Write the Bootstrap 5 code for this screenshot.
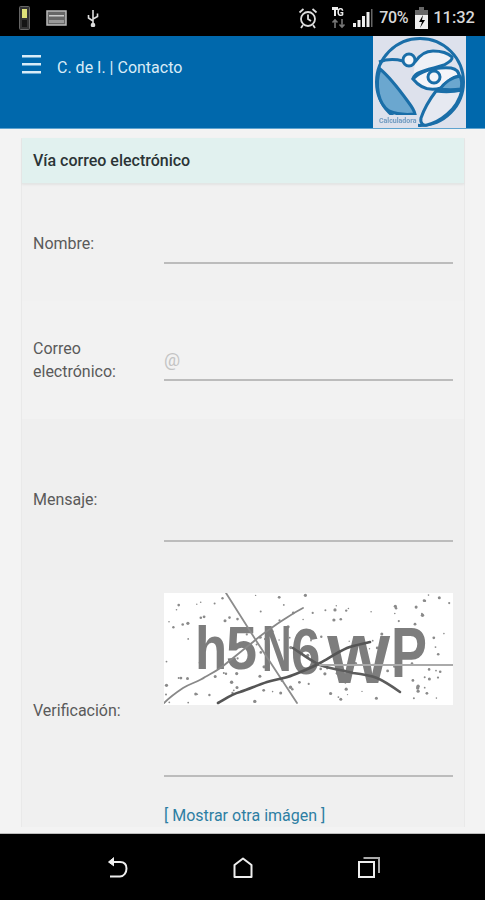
<!DOCTYPE html>
<html lang="es">
<head>
  <meta charset="UTF-8" />
  <meta name="viewport" content="width=device-width, initial-scale=1.0" />
  <title>C. de I. | Contacto</title>
  <link href="https://cdn.jsdelivr.net/npm/bootstrap@5.3.3/dist/css/bootstrap.min.css" rel="stylesheet" />
  <script src="https://cdn.jsdelivr.net/npm/bootstrap@5.3.3/dist/js/bootstrap.bundle.min.js"></script>
  <style>
    body { height: 900px; overflow: hidden; background: #f3f3f3; font-family: Roboto, "Liberation Sans", sans-serif; font-size: 16px; color: #5a5a5a; }
    .barra-estado { height: 36px; background: #000; color: #d8d8d8; padding: 0 10px 0 19px; }
    .barra-estado .hora { font-size: 16.500px; font-weight: 500; margin-left: 5px; }
    .barra-estado .nivel { font-size: 16px; font-weight: 500; letter-spacing: -.4px; margin: 0 7px 0 6px; }
    .icono-suave { filter: blur(.5px); }
    .alarma { margin-right: 13px; }
    .red { margin-right: 7px; }
    .cabecera { height: 93px; background: #0068ac; border-bottom: 1px solid #5ea3cf; padding: 0 19px 0 22px; }
    .cabecera-izq { padding-top: 19px; }
    .cabecera .titulo { color: #d9ecf7; font-size: 16px; margin-left: 16px; line-height: 26px; }
    .boton-menu { background: none; border: 0; padding: 0; line-height: 0; }
    .logo { width: 93px; height: 92px; display: block; }
    .contenido { flex: 1 1 auto; min-height: 0; overflow: hidden; padding: 9px 20px 0 21px; }
    .tarjeta { background: #f1f1f1; border: 0; border-left: 1px solid #e9e9e9; border-right: 1px solid #e9e9e9; border-radius: 0; }
    .tarjeta-titulo { height: 46px; background: #e1f1ef; color: #2b3436; font-size: 16px; font-weight: 500; padding: 0 11px; border-bottom: 1px solid #e3e6e5; line-height: 45px; box-shadow: 0 1px 2px rgba(0,0,0,.06); }
    .fila-campo { padding: 0 11px; }
    .etiqueta { flex: 0 0 131px; width: 131px; margin: 0; padding-right: 20px; line-height: 23px; }
    .control { flex: 1 1 auto; min-width: 0; }
    .campo { display: block; width: 100%; height: 41px; background: transparent; border: 0; border-bottom: 2px solid #bcbcbc; border-radius: 0; padding: 0; font-size: 18px; box-shadow: none; }
    .campo::placeholder { color: #c4c4c4; }
    .area { height: 85px; resize: none; }
    .f-nombre { padding-top: 39px; padding-bottom: 37px; }
    .f-correo { padding-top: 36px; padding-bottom: 36px; background: #f2f2f2; }
    .f-mensaje { padding-top: 38px; padding-bottom: 38px; background: #efefef; }
    .f-verif { padding-top: 13px; background: #f0f0f0; }
    .captcha { display: block; width: 289px; height: 112px; background: #fff; margin-bottom: 31px; filter: blur(.6px); }
    .captcha text { font-family: "Liberation Sans", sans-serif; font-weight: 700; font-size: 62px; fill: #7d7d7d; }
    .otra { display: block; margin-top: 28px; color: #2d7ea3; text-decoration: none; font-size: 16px; line-height: 22px; }
    .barra-nav { height: 67px; flex: 0 0 67px; background: #000; border-top: 1px solid #bdbdbd; padding: 0 0 0 107px; gap: 105px; filter: blur(.3px); }
  </style>
</head>
<body class="d-flex flex-column">

  <!-- barra de estado -->
  <div class="barra-estado d-flex align-items-center flex-shrink-0">
    <svg class="icono-suave me-3" width="11" height="24" viewBox="0 0 11 24">
      <rect x="0.5" y="0.5" width="10" height="23" rx="1" fill="#333" stroke="#666"/>
      <rect x="3" y="3" width="5" height="9" fill="#dfe27a"/>
      <rect x="3" y="14" width="5" height="7" fill="#151515"/>
    </svg>
    <svg class="icono-suave me-3" width="21" height="16" viewBox="0 0 21 16">
      <rect x="1" y="1" width="19" height="14" fill="#666" stroke="#bbb" stroke-width="1.5"/>
      <rect x="3" y="5" width="15" height="1.5" fill="#ccc"/>
      <rect x="3" y="10" width="15" height="3" fill="#999"/>
    </svg>
    <svg class="icono-suave ms-1" width="12" height="18" viewBox="0 0 12 18" fill="none" stroke="#ddd" stroke-width="1.6">
      <path d="M6 1v16M1.5 6v3l4.5 3M10.5 4.5v3L6 10"/>
      <circle cx="6" cy="16" r="1.5" fill="#ddd"/>
    </svg>

    <div class="ms-auto d-flex align-items-center">
      <svg class="icono-suave alarma" width="20" height="22" viewBox="0 0 20 22" fill="none" stroke="#ddd" stroke-width="1.8">
        <circle cx="10" cy="12" r="7"/>
        <path d="M10 7.500V12l3 2M1.500 5.500l4-3.500M18.500 5.500l-4-3.500M5 18l-2 3M15 18l2 3"/>
      </svg>
      <svg class="icono-suave red" width="15" height="24" viewBox="0 0 15 24">
        <path d="M1 1h6v3H5v6H3V4H1z" fill="#eee"/>
        <text x="6" y="10" font-size="10" font-weight="700" fill="#eee" font-family="Roboto, sans-serif">G</text>
        <path d="M4 22v-8M1.500 16.500 4 14l2.500 2.500M11 13v8M8.500 18.500 11 21l2.500-2.500" stroke="#777" stroke-width="1.6" fill="none"/>
      </svg>
      <svg class="icono-suave" width="20" height="18" viewBox="0 0 20 18">
        <rect x="0" y="14" width="3" height="4" fill="#eee"/>
        <rect x="4.500" y="11" width="3" height="7" fill="#eee"/>
        <rect x="9" y="7" width="3" height="11" fill="#eee"/>
        <rect x="13.500" y="3" width="3" height="15" fill="#eee"/>
        <rect x="18" y="0" width="1.500" height="18" fill="#666"/>
      </svg>
      <span class="nivel">70%</span>
      <svg class="icono-suave" width="13" height="22" viewBox="0 0 13 22">
        <rect x="4" y="0" width="5" height="3" fill="#666"/>
        <rect x="0" y="3" width="13" height="5" fill="#666"/>
        <rect x="0" y="8" width="13" height="14" fill="#eee"/>
        <path d="M8 8 4 15h3l-2 6 5-8H7z" fill="#000"/>
      </svg>
      <span class="hora">11:32</span>
    </div>
  </div>

  <!-- cabecera -->
  <nav class="cabecera d-flex justify-content-between flex-shrink-0">
    <div class="cabecera-izq d-flex align-items-start">
      <button class="boton-menu" type="button" aria-label="Menú">
        <svg width="19" height="20" viewBox="0 0 19 20" fill="#d9ecf7">
          <rect y="0" width="19" height="2.500"/>
          <rect y="8" width="19" height="2.500"/>
          <rect y="16" width="19" height="2.500"/>
        </svg>
      </button>
      <span class="titulo">C. de I. | Contacto</span>
    </div>
    <svg class="logo" viewBox="0 0 93 92">
      <rect width="93" height="92" fill="#dde1ec"/>
      <g class="icono-suave" fill="none" stroke="#1a6ea8" stroke-width="3">
        <circle cx="47" cy="46" r="43.500"/>
        <path d="M7 33C18 42 28 56 36 67c3 4 5 7 6 11-9 1-19 0-26-3C6 68 1 50 7 33z" fill="#6ba7cf"/>
        <rect x="4" y="79" width="41" height="12" fill="#dde1ec" stroke="none"/>
        <path d="M6 26c8-3 16-3 24-1"/>
        <path d="M42 26C46 20 52 15 60 15c8 0 15 2 19 6 1 3-3 5-8 8-9 3-18 4-26 8-3 2-5 4-5 6" fill="#eff1f6"/>
        <path d="M40 43c8-8 20-12 38-11 5 1 8 4 8 8-6 1-12 5-18 12-10 3-20 1-28-9z" fill="#f4f5f9"/>
        <circle cx="36" cy="24" r="6" fill="#f4f5f9"/>
        <circle cx="61" cy="41" r="6" fill="#f4f5f9"/>
        <path d="M67 53c4-6 12-12 20-13 2 4 2 9 1 13-7 1-14 1-21 0z" fill="#6ba7cf"/>
        <path d="M63 55c-6 8-12 18-15 27-1 5 2 8 6 7 12-3 30-14 35-35-9 2-18 2-26 1z" fill="#e6e9f1"/>
      </g>
      <text class="icono-suave" x="6" y="87" font-size="7" font-weight="700" font-family="Roboto, sans-serif" fill="#6f9ac0">Calculadora</text>
    </svg>
  </nav>

  <!-- contenido -->
  <main class="contenido">
    <div class="card tarjeta">
      <div class="tarjeta-titulo">Vía correo electrónico</div>
      <form>
        <div class="fila-campo f-nombre d-flex align-items-center">
          <label class="etiqueta" for="nombre">Nombre:</label>
          <div class="control"><input id="nombre" class="form-control campo" type="text" /></div>
        </div>
        <div class="fila-campo f-correo d-flex align-items-center">
          <label class="etiqueta" for="correo">Correo electrónico:</label>
          <div class="control"><input id="correo" class="form-control campo" type="email" placeholder="@" /></div>
        </div>
        <div class="fila-campo f-mensaje d-flex align-items-center">
          <label class="etiqueta" for="mensaje">Mensaje:</label>
          <div class="control"><textarea id="mensaje" class="form-control campo area"></textarea></div>
        </div>
        <div class="fila-campo f-verif d-flex align-items-center">
          <label class="etiqueta" for="verif">Verificación:</label>
          <div class="control">
            <svg class="captcha" viewBox="0 0 289 112">
              <g id="puntos" fill="#8a8a8a"></g>
              <text transform="translate(31 76) scale(.85 1)">h</text>
              <text transform="translate(62 76) scale(.9 1)">5</text>
              <text transform="translate(98 78) scale(.66 1.04)">N</text>
              <text transform="translate(127 81) scale(.85 1.04)">6</text>
              <text transform="translate(163 90) scale(1.08 1.1)">W</text>
              <text transform="translate(227 84) scale(.87 1.15)">P</text>
              <g fill="none" stroke-linecap="round">
                <path d="M62 0 93 49 133 110" stroke="#8c8c8c" stroke-width="1.800"/>
                <path d="M0 110C6 104 13 99 19 95 27 90 34 89 41 84 50 79 55 77 64 69 73 62 80 56 89 49 98 41 106 36 116 29 124 24 131 19 139 15" stroke="#888" stroke-width="1.800"/>
                <path d="M54 110C61 106 68 101 76 99 85 96 94 92 103 89 112 86 120 86 129 82 139 78 147 75 156 70 165 65 174 59 183 55 190 52 198 51 206 49" stroke="#555" stroke-width="2.600"/>
                <path d="M129 55C138 61 147 68 156 72 167 76 178 77 189 80 197 81 205 82 213 85 222 89 229 94 236 99" stroke="#5c5c5c" stroke-width="2.600"/>
                <path d="M156 72H289" stroke="#aaa" stroke-width="2"/>
              </g>
            </svg>
            <input id="verif" class="form-control campo" type="text" />
            <a class="otra" href="#">[ Mostrar otra imágen ]</a>
          </div>
        </div>
      </form>
    </div>
  </main>

  <!-- botones android -->
  <div class="barra-nav d-flex align-items-center">
    <svg width="21" height="21" viewBox="0 0 21 21" fill="none" stroke="#eee" stroke-width="2">
      <path d="M2 5h11c4 0 6.500 2.500 6.500 6.500S17 19.500 13 19.500H3"/>
      <path d="M7 .500 1.500 5 7 9" fill="#eee" stroke-width="1"/>
    </svg>
    <svg width="20" height="21" viewBox="0 0 20 21" fill="none" stroke="#eee" stroke-width="2">
      <path d="M1.500 8 10 1.500 18.500 8v12h-17z" stroke-linejoin="round"/>
    </svg>
    <svg width="22" height="21" viewBox="0 0 22 21" fill="none" stroke="#eee" stroke-width="2">
      <rect x="1" y="5" width="15" height="15"/>
      <path d="M5.500 1H21v15" stroke="#aaa"/>
    </svg>
  </div>

  <script>
    // puntos del captcha, con semilla fija
    var s = 7;
    function azar() { s = (s * 16807) % 2147483647; return s / 2147483647; }
    var html = '';
    for (var i = 0; i < 150; i++) {
      html += '<circle cx="' + (azar() * 285 + 2).toFixed(1) + '" cy="' + (azar() * 108 + 2).toFixed(1) + '" r="' + (0.7 + azar() * 1).toFixed(1) + '"/>';
    }
    document.getElementById('puntos').innerHTML = html;
  </script>
</body>
</html>
